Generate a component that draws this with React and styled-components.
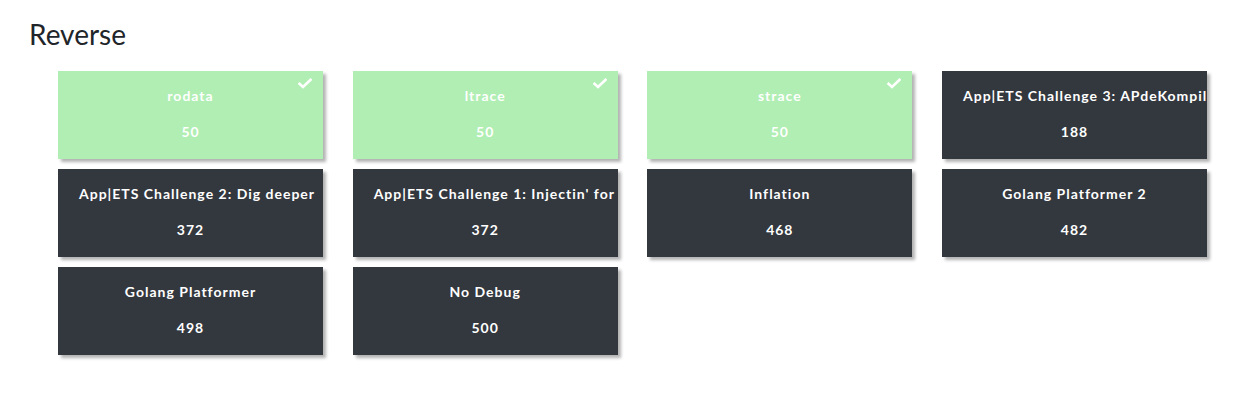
import React from "react";
import styled, { createGlobalStyle } from "styled-components";

const Global = createGlobalStyle`
  html, body { margin: 0; padding: 0; background: #ffffff; }
  body { font-family: Lato, "Open Sans", sans-serif; }
`;

const Page = styled.div`
  padding: 17px 29px 40px 29px;
`;

const Heading = styled.h3`
  margin: 0 0 20px 0;
  font-family: Lato, sans-serif;
  font-weight: 400;
  font-size: 28px;
  line-height: 34px;
  color: #212529;
`;

const Grid = styled.div`
  display: grid;
  grid-template-columns: repeat(4, 265px);
  column-gap: 29.67px;
  row-gap: 10px;
  padding-left: 29px;
`;

const Card = styled.button`
  position: relative;
  box-sizing: border-box;
  height: 88px;
  padding: 15px 21px 0 21px;
  border: none;
  background: ${(p) => (p.$solved ? "#b0eeb3" : "#33373e")};
  color: #ffffff;
  box-shadow: 3px 3px 3px rgba(0, 0, 0, 0.3);
  overflow: hidden;
  display: flex;
  flex-direction: column;
  align-items: stretch;
  font-family: Lato, sans-serif;
  cursor: pointer;
`;

const Name = styled.div`
  font-size: 14px;
  font-weight: 700;
  letter-spacing: 1px;
  line-height: 20px;
  white-space: nowrap;
  text-align: center;
`;

const Points = styled.div`
  margin-top: 16px;
  font-size: 14px;
  font-weight: 700;
  letter-spacing: 1px;
  line-height: 20px;
  text-align: center;
`;

const Check = styled.svg`
  position: absolute;
  top: 7px;
  right: 11px;
  width: 14px;
  height: 11px;
`;

const challenges = [
  { name: "rodata", points: 50, solved: true },
  { name: "ltrace", points: 50, solved: true },
  { name: "strace", points: 50, solved: true },
  { name: "App|ETS Challenge 3: APdeKompil", points: 188 },
  { name: "App|ETS Challenge 2: Dig deeper", points: 372 },
  { name: "App|ETS Challenge 1: Injectin' for", points: 372 },
  { name: "Inflation", points: 468 },
  { name: "Golang Platformer 2", points: 482 },
  { name: "Golang Platformer", points: 498 },
  { name: "No Debug", points: 500 },
];

export default function App() {
  return (
    <Page>
      <Global />
      <Heading>Reverse</Heading>
      <Grid>
        {challenges.map((c) => (
          <Card key={c.name} $solved={c.solved}>
            {c.solved && (
              <Check viewBox="0 0 14 11">
                <path
                  d="M1.5 5.8 L5 9 L12.5 1.8"
                  fill="none"
                  stroke="#ffffff"
                  strokeWidth="2.6"
                  strokeLinecap="square"
                />
              </Check>
            )}
            <Name>{c.name}</Name>
            <Points>{c.points}</Points>
          </Card>
        ))}
      </Grid>
    </Page>
  );
}
